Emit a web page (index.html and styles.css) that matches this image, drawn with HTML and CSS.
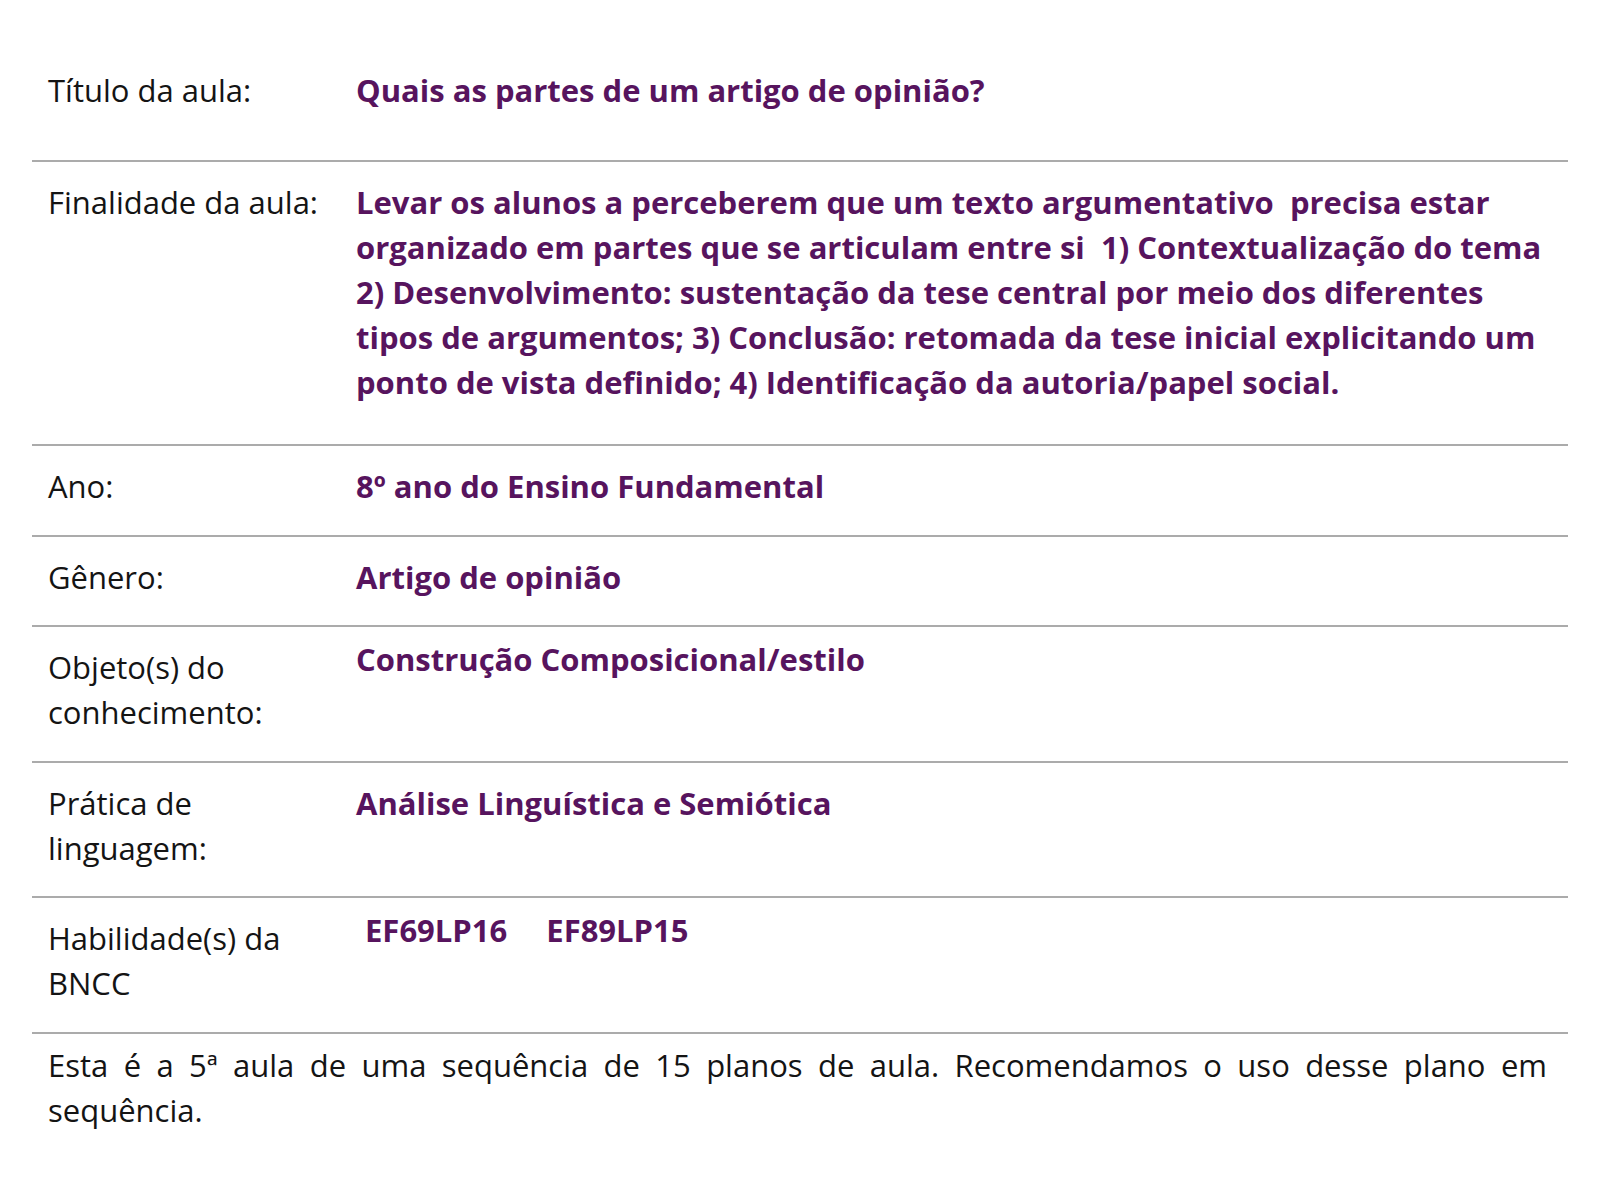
FILE: index.html
```html
<!DOCTYPE html>
<html lang="pt-BR">
<head>
<meta charset="utf-8">
<title>Plano de aula</title>
<link rel="stylesheet" href="styles.css">
</head>
<body>
<div class="sheet">
  <div class="row row-title">
    <div class="label">Título da aula:</div>
    <div class="value">Quais as partes de um artigo de opinião?</div>
  </div>
  <div class="row row-goal">
    <div class="label">Finalidade da aula:</div>
    <div class="value">Levar os alunos a perceberem que um texto argumentativo&nbsp; precisa estar organizado em partes que se articulam entre si&nbsp; 1) Contextualização do tema 2) Desenvolvimento: sustentação da tese central por meio dos diferentes tipos de argumentos; 3) Conclusão: retomada da tese inicial explicitando um ponto de vista definido; 4) Identificação da autoria/papel social.</div>
  </div>
  <div class="row">
    <div class="label">Ano:</div>
    <div class="value">8º ano do Ensino Fundamental</div>
  </div>
  <div class="row">
    <div class="label">Gênero:</div>
    <div class="value">Artigo de opinião</div>
  </div>
  <div class="row">
    <div class="label">Objeto(s) do conhecimento:</div>
    <div class="value value-raised">Construção Composicional/estilo</div>
  </div>
  <div class="row">
    <div class="label">Prática de linguagem:</div>
    <div class="value">Análise Linguística e Semiótica</div>
  </div>
  <div class="row">
    <div class="label">Habilidade(s) da BNCC</div>
    <div class="value value-raised"><span class="code">EF69LP16</span><span class="code">EF89LP15</span></div>
  </div>
  <p class="note">Esta é a 5ª aula de uma sequência de 15 planos de aula. Recomendamos o uso desse plano em sequência.</p>
</div>
</body>
</html>
```

FILE: styles.css
```css
html, body {
  margin: 0;
  padding: 0;
  background: #ffffff;
}

body {
  font-family: "Open Sans", "Noto Sans", sans-serif;
  font-size: 31px;
  line-height: 45px;
  color: #141414;
}

.sheet {
  margin: 0 32px;
  padding-top: 50px;
}

.row {
  display: grid;
  grid-template-columns: 309px 1fr;
  border-bottom: 2px solid #ababab;
}

.label {
  padding: 18px 16px 25.5px 16px;
}

.value {
  padding: 18px 20px 25.5px 15px;
  font-weight: 700;
  color: #57145e;
}

.row-title .label,
.row-title .value {
  padding-bottom: 47px;
}

.row-goal .label,
.row-goal .value {
  padding-bottom: 39px;
}

.value-raised {
  padding-top: 10px;
}

.code {
  display: inline-block;
  margin-left: 9px;
}

.code + .code {
  margin-left: 39px;
}

.note {
  margin: 0;
  padding: 9px 21px 0 16px;
  text-align: justify;
}
```
